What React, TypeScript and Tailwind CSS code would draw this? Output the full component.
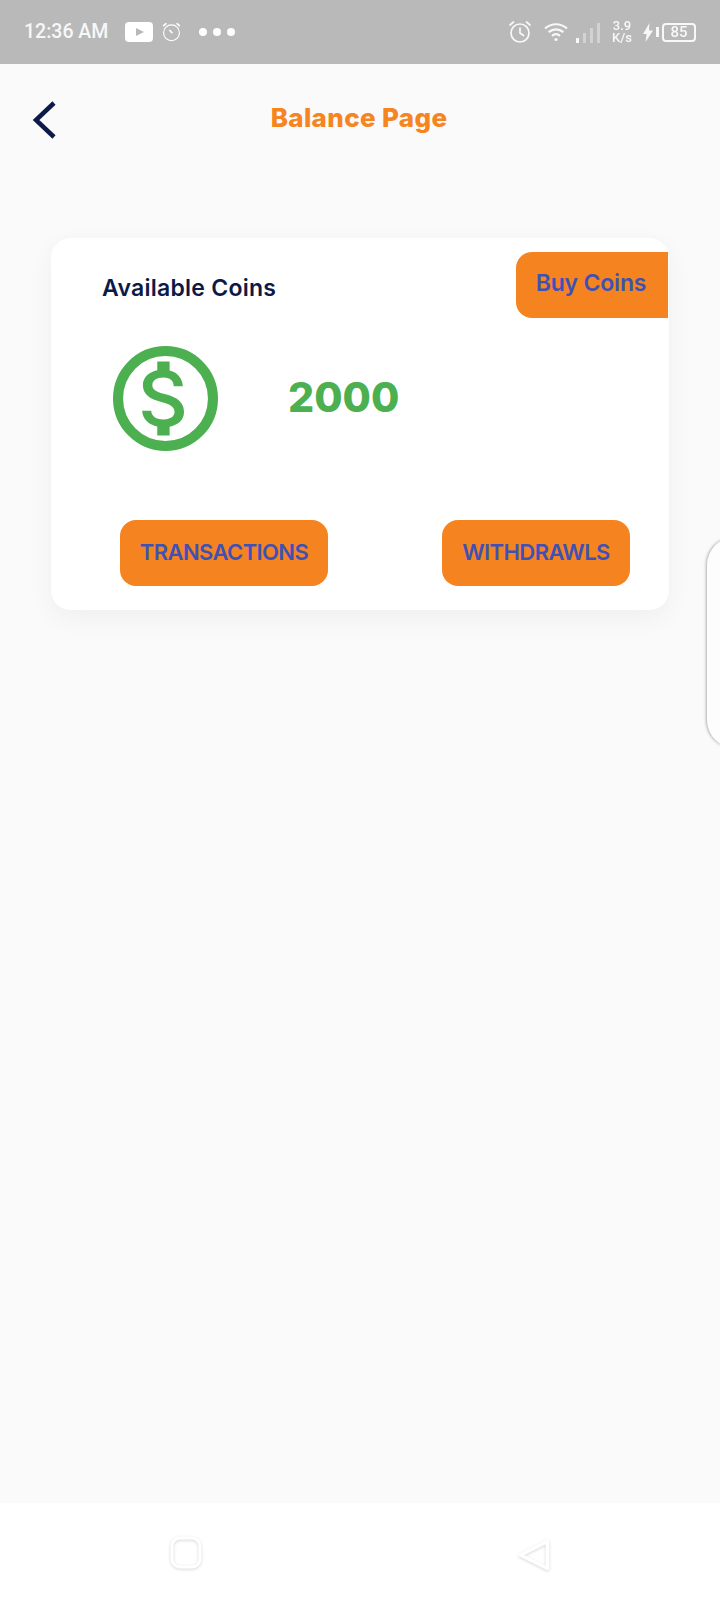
const AlarmIcon = ({ size, stroke }: { size: number; stroke: number }) => (
  <svg width={size} height={size} viewBox="0 0 24 24" fill="none" stroke="white" strokeWidth={stroke} strokeLinecap="round">
    <circle cx="12" cy="13" r="9" />
    <path d="M12 8v5l3.5 2.5" />
    <path d="M2 5l3.5-3M22 5l-3.5-3" />
  </svg>
);

const StatusBar = () => (
  <div className="h-16 shrink-0 bg-[#b9b9b9] flex items-center pl-[24px] pr-[24px] text-white font-['Roboto',sans-serif]">
    <span className="text-[19.5px] font-medium leading-none text-[#f7f7f7] w-[101px]">12:36 AM</span>
    <svg width="28" height="20" viewBox="0 0 28 20">
      <rect width="28" height="20" rx="4" fill="white" />
      <path d="M11 6l8 4-8 4z" fill="#b9b9b9" />
    </svg>
    <div className="ml-[9px]">
      <svg width="19" height="20" viewBox="0 0 24 24" fill="none" stroke="white" strokeWidth="1.4" strokeLinecap="round">
        <circle cx="12" cy="13" r="10" />
        <path d="M10 10l2.5 3" strokeWidth="2" />
        <path d="M2 4l3-2.5M22 4l-3-2.5" strokeWidth="2" />
      </svg>
    </div>
    <div className="ml-[18px] flex gap-[6px]">
      <span className="w-2 h-2 rounded-full bg-white" />
      <span className="w-2 h-2 rounded-full bg-white" />
      <span className="w-2 h-2 rounded-full bg-white" />
    </div>
    <div className="ml-auto flex items-center opacity-90">
      <AlarmIcon size={24} stroke={1.7} />
      <svg width="24" height="20" viewBox="0 0 24 20" fill="none" stroke="white" strokeWidth="2.2" className="ml-[12px]">
        <path d="M1 6.5C7.5 .8 16.5 .8 23 6.5" />
        <path d="M4.6 10.2c4.4-3.8 10.4-3.8 14.8 0" />
        <path d="M8 13.8c2.4-2 5.6-2 8 0" />
        <circle cx="12" cy="17.5" r="1.6" fill="white" stroke="none" />
      </svg>
      <div className="ml-[8px] flex items-end gap-[4px] h-[20px] mt-[2px]">
        <span className="w-[3px] h-[5px] bg-white" />
        <span className="w-[3px] h-[10px] bg-white/40" />
        <span className="w-[3px] h-[15px] bg-white/40" />
        <span className="w-[3px] h-[20px] bg-white/40" />
      </div>
      <div className="ml-[11px] w-[22px] flex flex-col items-center text-[13px] font-medium leading-[12px]">
        <span>3.9</span>
        <span>K/s</span>
      </div>
      <svg width="10" height="19" viewBox="0 0 10 19" fill="white" className="ml-[10px]">
        <path d="M6.5 0L0 11h3.6L2.6 19 10 7.5H6z" />
      </svg>
      <span className="ml-[3px] w-[3px] h-[10px] bg-white" />
      <div className="ml-[3px] w-[34px] h-[19px] border-2 border-white rounded-[4px] flex items-center justify-center text-[15px] font-medium leading-none">
        85
      </div>
    </div>
  </div>
);

const Header = () => (
  <div className="flex items-center h-[38px] mt-[37px] pl-[32px] relative">
    <svg width="24" height="38" viewBox="0 0 24 38" fill="none" stroke="#0c1a47" strokeWidth="4.5">
      <path d="M22 2L4 19l18 17" />
    </svg>
    <h1 className="flex-1 text-center pr-[58px] -mt-[5px] text-[26px] font-extrabold tracking-[0.35px] text-[#f6841f]">Balance Page</h1>
  </div>
);

const ActionButton = ({ label, width }: { label: string; width: string }) => (
  <button className={`${width} h-[66px] rounded-[16px] bg-[#f58420] text-[#3f51b5] text-[22px] font-semibold tracking-[-0.6px] flex items-center justify-center pb-[2px]`}>
    {label}
  </button>
);

const BalanceCard = () => (
  <div className="mt-[99px] ml-[51px] w-[618px] h-[372px] bg-white rounded-[20px] shadow-[0_8px_24px_rgba(60,70,90,0.06)] flex flex-col">
    <div className="flex justify-between items-start pt-[14px] pr-[1px]">
      <span className="ml-[51px] mt-[18px] text-[23px] font-semibold tracking-[0.25px] leading-[36px] text-[#0c1a47]">Available Coins</span>
      <button className="w-[152px] h-[66px] rounded-l-[16px] bg-[#f58420] text-[#3f51b5] text-[23px] font-semibold tracking-[-0.2px] pb-[3px] pr-[2px]">
        Buy Coins
      </button>
    </div>
    <div className="flex items-center mt-[28px] ml-[62px]">
      <svg width="105" height="105" viewBox="0 0 24 24" fill="#4caf50">
        <circle cx="12" cy="12" r="10.85" fill="none" stroke="#4caf50" strokeWidth="2.3" />
        <path
          transform="translate(12 12) scale(.94) translate(-12 -12)"
          d="M11.8 10.9c-2.27-.59-3-1.2-3-2.15 0-1.09 1.01-1.85 2.7-1.85 1.78 0 2.44.85 2.5 2.1h2.21c-.07-1.72-1.12-3.3-3.21-3.81V3h-3v2.16c-1.94.42-3.5 1.68-3.5 3.61 0 2.31 1.91 3.46 4.7 4.13 2.5.6 3 1.48 3 2.41 0 .69-.49 1.79-2.7 1.79-2.06 0-2.87-.92-2.98-2.1h-2.2c.12 2.19 1.76 3.42 3.68 3.83V21h3v-2.15c1.95-.37 3.5-1.5 3.5-3.55 0-2.84-2.43-3.81-4.7-4.4z"
        />
      </svg>
      <span className="ml-[70px] -mt-[3px] text-[41px] font-extrabold leading-none text-[#4caf50]">2000</span>
    </div>
    <div className="flex justify-between mt-[69px] pl-[69px] pr-[39px]">
      <ActionButton label="TRANSACTIONS" width="w-[208px]" />
      <ActionButton label="WITHDRAWLS" width="w-[188px]" />
    </div>
  </div>
);

const NavBar = () => (
  <div className="h-[97px] shrink-0 bg-white flex items-start pt-[33px] pl-[168px]">
    <svg width="36" height="38" viewBox="0 0 36 38" fill="none" className="-mt-[2px] drop-shadow-[0_1px_1.5px_rgba(0,0,0,0.16)]">
      <rect x="4" y="4" width="28" height="29" rx="8" stroke="white" strokeWidth="3" />
    </svg>
    <svg width="38" height="38" viewBox="0 0 38 38" fill="none" className="ml-[311px] drop-shadow-[0_1px_1.5px_rgba(0,0,0,0.16)]">
      <path d="M32.5 5.5L5.5 19l27 13.5z" stroke="white" strokeWidth="3.5" strokeLinejoin="round" />
    </svg>
  </div>
);

export default function App() {
  return (
    <div className="relative w-[720px] h-[1600px] overflow-hidden bg-[#fafafa] flex flex-col font-['Inter',sans-serif]">
      <StatusBar />
      <div className="flex-1">
        <Header />
        <BalanceCard />
      </div>
      <div className="absolute left-[707px] top-[537px] w-[40px] h-[211px] bg-[#fdfdfd] rounded-l-[28px] shadow-[-1px_0_3px_rgba(0,0,0,0.3)]" />
      <NavBar />
    </div>
  );
}
